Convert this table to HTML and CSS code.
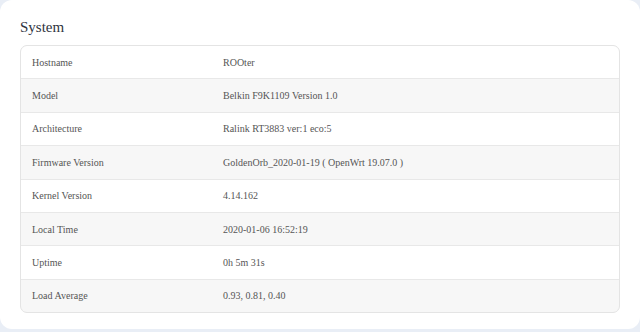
FILE: index.html
```html
<!DOCTYPE html>
<html>
<head>
<meta charset="utf-8">
<link rel="stylesheet" href="styles.css">
</head>
<body>
<div class="card">
  <h2 class="title">System</h2>
  <div class="table">
    <div class="row"><div class="cell">Hostname</div><div class="cell">ROOter</div></div>
    <div class="row"><div class="cell">Model</div><div class="cell">Belkin F9K1109 Version 1.0</div></div>
    <div class="row"><div class="cell">Architecture</div><div class="cell">Ralink RT3883 ver:1 eco:5</div></div>
    <div class="row"><div class="cell">Firmware Version</div><div class="cell">GoldenOrb_2020-01-19 ( OpenWrt 19.07.0 )</div></div>
    <div class="row"><div class="cell">Kernel Version</div><div class="cell">4.14.162</div></div>
    <div class="row"><div class="cell">Local Time</div><div class="cell">2020-01-06 16:52:19</div></div>
    <div class="row"><div class="cell">Uptime</div><div class="cell">0h 5m 31s</div></div>
    <div class="row"><div class="cell">Load Average</div><div class="cell">0.93, 0.81, 0.40</div></div>
  </div>
</div>
</body>
</html>
```
FILE: styles.css
```css
html, body {
  margin: 0;
  padding: 0;
  background: #e9eef6;
  font-family: "Liberation Serif", "Times New Roman", serif;
}
.card {
  background: #ffffff;
  width: 640px;
  height: 329px;
  box-sizing: border-box;
  border-radius: 12px;
  padding: 18px 20px 0 20px;
}
.title {
  margin: 0 0 9px 0;
  font-size: 15px;
  font-weight: normal;
  line-height: 18px;
  color: #2f3440;
}
.table {
  border: 1px solid #e4e4e4;
  border-radius: 7px;
  overflow: hidden;
  display: grid;
  grid-template-rows: repeat(8, 32.375px);
  row-gap: 1px;
  background: #e8e8e8;
}
.row {
  display: grid;
  grid-template-columns: 191px 1fr;
  align-items: center;
  padding: 0 11px;
  background: #ffffff;
  font-size: 10px;
  color: #555555;
}
.row:nth-child(even) {
  background: #f7f7f7;
}
```
